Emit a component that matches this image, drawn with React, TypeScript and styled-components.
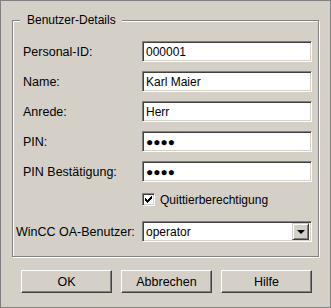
import { Fragment } from 'react'
import styled, { createGlobalStyle } from 'styled-components'

const GlobalStyle = createGlobalStyle`
  html, body {
    margin: 0;
    padding: 0;
    background: #d4d0c8;
  }

  body {
    font-family: 'Liberation Sans', Arial, sans-serif;
    font-size: 12px;
    color: #000;
  }

  * {
    box-sizing: border-box;
  }
`

const Dialog = styled.div`
  width: 331px;
  height: 308px;
  padding: 12px 11px 0;
  border: 1px solid #808080;
  background: #d4d0c8;
`

const Group = styled.fieldset`
  margin: 0;
  padding: 14px 6px 14px 3px;
  min-inline-size: 0;
  border: 1px solid #808080;
  box-shadow: inset 1px 1px 0 #fff, 1px 1px 0 #fff;
`

const Legend = styled.legend`
  margin-left: 4px;
  padding: 0 6px 0 7px;
  line-height: 14px;
  background: #d4d0c8;
`

const Form = styled.div`
  display: grid;
  grid-template-columns: 126px 170px;
  grid-auto-rows: 21px;
  row-gap: 9px;
  align-items: center;
`

const Label = styled.label<{ $indent?: number }>`
  padding-left: ${(p) => p.$indent ?? 7}px;
  font-size: 12.5px;
  white-space: nowrap;
`

const Field = styled.input`
  width: 170px;
  height: 21px;
  padding: 0 3px;
  border: 1px solid;
  border-color: #808080 #fff #fff #808080;
  box-shadow: inset 1px 1px 0 #404040, inset -1px -1px 0 #d4d0c8;
  background: #fff;
  font-family: 'Liberation Sans', Arial, sans-serif;
  font-size: 12px;
  color: #000;
  outline: none;
`

const CheckRow = styled.div`
  grid-column: 2;
  height: 22px;
  display: flex;
  align-items: flex-start;
  padding-top: 2px;
  gap: 5px;
`

const CheckBox = styled.span`
  width: 13px;
  height: 13px;
  flex: none;
  display: flex;
  align-items: center;
  justify-content: center;
  border: 1px solid;
  border-color: #808080 #fff #fff #808080;
  box-shadow: inset 1px 1px 0 #404040, inset -1px -1px 0 #d4d0c8;
  background: #fff;
`

const CheckText = styled.span`
  line-height: 14px;
`

const Combo = styled.div`
  width: 170px;
  height: 21px;
  display: flex;
  align-items: center;
  padding: 2px;
  border: 1px solid;
  border-color: #808080 #fff #fff #808080;
  box-shadow: inset 1px 1px 0 #404040, inset -1px -1px 0 #d4d0c8;
  background: #fff;
`

const ComboText = styled.span`
  flex: 1;
  padding-left: 1px;
`

const DropButton = styled.span`
  width: 17px;
  height: 17px;
  display: flex;
  align-items: center;
  justify-content: center;
  border: 1px solid;
  border-color: #d4d0c8 #404040 #404040 #d4d0c8;
  box-shadow: inset 1px 1px 0 #fff, inset -1px -1px 0 #808080;
  background: #d4d0c8;

  &::after {
    content: '';
    border-top: 4px solid #000;
    border-left: 4px solid transparent;
    border-right: 4px solid transparent;
    margin-top: 1px;
  }
`

const ButtonRow = styled.div`
  display: flex;
  justify-content: space-between;
  margin: 13px 7px 0 9px;
`

const Button = styled.button`
  width: 91px;
  height: 23px;
  padding: 0;
  border: 1px solid;
  border-color: #fff #404040 #404040 #fff;
  box-shadow: inset -1px -1px 0 #808080, inset 1px 1px 0 #d4d0c8;
  background: #d4d0c8;
  font-family: 'Liberation Sans', Arial, sans-serif;
  font-size: 12.5px;
  color: #000;
`

const fields = [
  { label: 'Personal-ID:', value: '000001' },
  { label: 'Name:', value: 'Karl Maier' },
  { label: 'Anrede:', value: 'Herr' },
  { label: 'PIN:', value: '●●●●' },
  { label: 'PIN Bestätigung:', value: '●●●●' },
]

export default function App() {
  return (
    <>
      <GlobalStyle />
      <Dialog>
        <Group>
          <Legend>Benutzer-Details</Legend>
          <Form>
            {fields.map((f) => (
              <Fragment key={f.label}>
                <Label>{f.label}</Label>
                <Field readOnly defaultValue={f.value} />
              </Fragment>
            ))}
            <CheckRow>
              <CheckBox>
                <svg width='7' height='7' viewBox='0 0 7 7' shapeRendering='crispEdges'>
                  <path
                    d='M6 0h1v1h-1zM5 1h2v1h-2zM0 2h1v1h-1zM4 2h3v1h-3zM0 3h2v1h-2zM3 3h3v1h-3zM0 4h5v1h-5zM1 5h3v1h-3zM2 6h1v1h-1z'
                    fill='#000'
                  />
                </svg>
              </CheckBox>
              <CheckText>Quittierberechtigung</CheckText>
            </CheckRow>
            <Label $indent={0}>WinCC OA-Benutzer:</Label>
            <Combo>
              <ComboText>operator</ComboText>
              <DropButton />
            </Combo>
          </Form>
        </Group>
        <ButtonRow>
          <Button>OK</Button>
          <Button>Abbrechen</Button>
          <Button>Hilfe</Button>
        </ButtonRow>
      </Dialog>
    </>
  )
}
